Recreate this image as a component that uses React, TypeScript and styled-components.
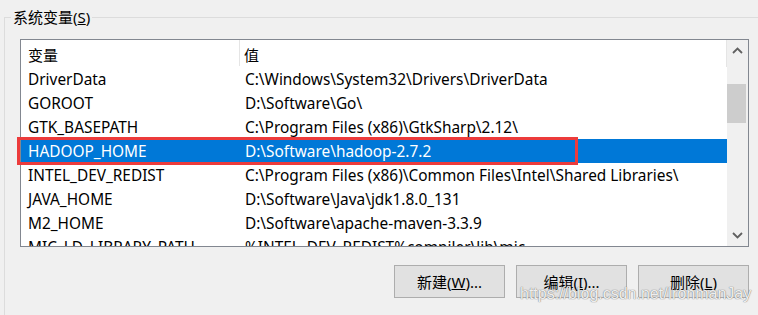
import React from "react";
import styled, { createGlobalStyle } from "styled-components";

const Global = createGlobalStyle`
  html, body { margin: 0; padding: 0; background: #f0f0f0; }
  * { box-sizing: border-box; }
`;

const FONT = `"Microsoft YaHei UI", "Noto Sans", "Noto Sans CJK SC", sans-serif`;

const Root = styled.div`
  position: relative;
  width: 758px;
  height: 315px;
  overflow: hidden;
  background: #f0f0f0;
  font-family: ${FONT};
  color: #000;
`;

const Group = styled.fieldset`
  margin: 6px 0 0 4px;
  padding: 0;
  width: 820px;
  min-width: 0;
  height: 420px;
  border: 1px solid #dcdcdc;
  border-right: none;
  border-bottom: none;
`;

const Legend = styled.legend`
  margin-left: 6px;
  padding: 0 2px;
  font-size: 15px;
  line-height: 22px;
`;

const ListBox = styled.div`
  margin: 11px 0 0 15px;
  width: 729px;
  height: 208px;
  border: 1px solid #828790;
  background: #fff;
  display: grid;
  grid-template-columns: 1fr 21px;
  overflow: hidden;
`;

const Table = styled.div`
  display: flex;
  flex-direction: column;
  overflow: hidden;
`;

const Header = styled.div`
  display: grid;
  grid-template-columns: 219px 1fr;
  height: 27px;
  flex: none;
  border-right: 1px solid #e5e5e5;
`;

const HeadCell = styled.div<{ $first?: boolean }>`
  display: flex;
  align-items: center;
  padding: 2px 0 0 ${(p) => (p.$first ? 7 : 4)}px;
  font-size: 15px;
  border-right: ${(p) => (p.$first ? "1px solid #e5e5e5" : "none")};
  margin-bottom: 1px;
`;

const Row = styled.div<{ $selected?: boolean }>`
  display: grid;
  grid-template-columns: 220px 1fr;
  height: 24px;
  flex: none;
  align-items: center;
  font-size: 15.4px;
  white-space: nowrap;
  background: ${(p) => (p.$selected ? "#0078d7" : "transparent")};
  color: ${(p) => (p.$selected ? "#fff" : "#000")};
`;

const Cell = styled.div<{ $first?: boolean }>`
  padding-left: ${(p) => (p.$first ? 7 : 4)}px;
  overflow: hidden;
`;

const ScrollBar = styled.div`
  display: flex;
  flex-direction: column;
  background: #f0f0f0;
`;

const ArrowBtn = styled.div`
  height: 21px;
  flex: none;
  display: flex;
  align-items: center;
  justify-content: center;
`;

const Track = styled.div`
  flex: 1;
  padding-top: 23px;
`;

const Thumb = styled.div`
  width: 19px;
  height: 39px;
  background: #cdcdcd;
`;

const Buttons = styled.div`
  margin: 18px 0 0 15px;
  width: 729px;
  display: flex;
  justify-content: flex-end;
  gap: 11px;
`;

const Button = styled.button`
  width: 111px;
  height: 33px;
  border: 1px solid #adadad;
  background: #e1e1e1;
  font-family: ${FONT};
  font-size: 15px;
  color: #000;
  padding: 0;
`;

const Highlight = styled.div`
  position: absolute;
  left: 17px;
  top: 137px;
  width: 561px;
  height: 28px;
  border: 3px solid #ec3b3b;
  pointer-events: none;
`;

const Watermark = styled.div`
  position: absolute;
  left: 520px;
  top: 285px;
  font-family: "Liberation Sans", Arial, sans-serif;
  font-size: 16px;
  color: rgba(255, 255, 255, 0.9);
  text-shadow: 0 0 1px rgba(110, 110, 110, 0.8), 0 0 1px rgba(110, 110, 110, 0.8);
  white-space: nowrap;
`;

const Chevron = ({ up }: { up?: boolean }) => (
  <svg width="11" height="7" viewBox="0 0 11 7">
    <path
      d={up ? "M1 6 L5.5 1.5 L10 6" : "M1 1 L5.5 5.5 L10 1"}
      fill="none"
      stroke="#606060"
      strokeWidth="1.8"
    />
  </svg>
);

const rows: [string, string][] = [
  ["DriverData", "C:\\Windows\\System32\\Drivers\\DriverData"],
  ["GOROOT", "D:\\Software\\Go\\"],
  ["GTK_BASEPATH", "C:\\Program Files (x86)\\GtkSharp\\2.12\\"],
  ["HADOOP_HOME", "D:\\Software\\hadoop-2.7.2"],
  ["INTEL_DEV_REDIST", "C:\\Program Files (x86)\\Common Files\\Intel\\Shared Libraries\\"],
  ["JAVA_HOME", "D:\\Software\\Java\\jdk1.8.0_131"],
  ["M2_HOME", "D:\\Software\\apache-maven-3.3.9"],
  ["MIC_LD_LIBRARY_PATH", "%INTEL_DEV_REDIST%compiler\\lib\\mic"],
];

export default function App() {
  return (
    <Root>
      <Global />
      <Group>
        <Legend>
          系统变量(<u>S</u>)
        </Legend>
        <ListBox>
          <Table>
            <Header>
              <HeadCell $first>变量</HeadCell>
              <HeadCell>值</HeadCell>
            </Header>
            {rows.map(([k, v]) => (
              <Row key={k} $selected={k === "HADOOP_HOME"}>
                <Cell $first>{k}</Cell>
                <Cell>{v}</Cell>
              </Row>
            ))}
          </Table>
          <ScrollBar>
            <ArrowBtn>
              <Chevron up />
            </ArrowBtn>
            <Track>
              <Thumb />
            </Track>
            <ArrowBtn>
              <Chevron />
            </ArrowBtn>
          </ScrollBar>
        </ListBox>
        <Buttons>
          <Button>
            新建(<u>W</u>)...
          </Button>
          <Button>
            编辑(<u>I</u>)...
          </Button>
          <Button>
            删除(<u>L</u>)
          </Button>
        </Buttons>
      </Group>
      <Highlight />
      <Watermark>https://blog.csdn.net/IronmanJay</Watermark>
    </Root>
  );
}
